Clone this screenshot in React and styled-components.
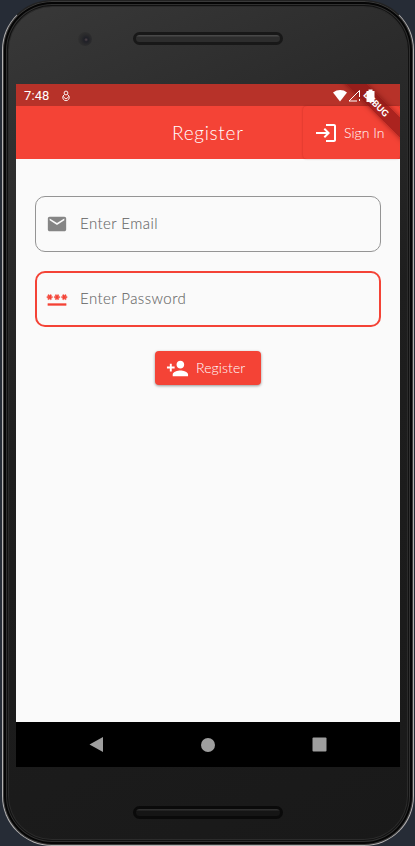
import React from "react";
import styled, { createGlobalStyle } from "styled-components";

const Global = createGlobalStyle`
  * { box-sizing: border-box; }
  body { margin: 0; background: #262c36; overflow: hidden; }
`;
const Stage = styled.div`
  width: 415px; height: 846px; padding: 0 1px 0 2px; overflow: hidden;
  background: #262c36;
  font-family: Lato, "Open Sans", sans-serif; font-weight: 300;
`;
const Phone = styled.div`
  width: 412px; height: 846px; padding: 1px 13px 0;
  display: flex; flex-direction: column;
  border-radius: 50px;
  border: 1px solid #b4b2b2;
  border-top-color: #222;
  background: linear-gradient(155deg, #393939 0%, #2b2b2b 22%, #1e1e1e 45%, #191919 100%);
  box-shadow: inset 0 0 0 1px #3a3a3a, inset 0 0 0 3px #050505, inset 0 0 0 4px #303030, inset 0 0 0 5px #111, inset 0 0 0 6px #2b2b2b;
`;
const Bezel = styled.div`
  height: ${(p) => p.$height}px; flex: none;
  display: flex; align-items: flex-start;
  padding: ${(p) => p.$top}px 0 0 ${(p) => p.$left}px;
`;
const Camera = styled.div`
  width: 14px; height: 14px; margin-right: 41px; border-radius: 50%;
  background: radial-gradient(circle at 58% 55%, #51454b 0, #1f2027 18%, #29292b 42%, #303030 70%);
`;
const Speaker = styled.div`
  width: 150px; height: 13px; border-radius: 7px;
  border: 3px solid ${(p) => p.$rim};
  background: linear-gradient(${(p) => p.$light} 0 1px, ${(p) => p.$fill} 2px);
`;
const Screen = styled.div`
  width: 384px; height: 683px; flex: none; display: flex; flex-direction: column;
  background: #fafafa; overflow: hidden; position: relative;
`;
const StatusBar = styled.div`
  height: 22px; flex: none; background: #b73229; color: #fff;
  display: flex; align-items: center; padding: 1px 23px 0 8px;
  font: 400 13px Roboto, sans-serif;
`;
const Clock = styled.span`width: 37px; letter-spacing: 0.1px;`;
const Signals = styled.div`
  margin-left: auto; display: flex; align-items: center; position: relative; z-index: 2;
`;
const AppBar = styled.header`
  height: 53px; flex: none; background: #f44336; color: #fff;
  display: flex; align-items: stretch;
`;
const Title = styled.h1`
  margin: 0; padding-left: 156px; width: 287px; line-height: 53px;
  font-size: 19px; font-weight: 300; letter-spacing: 0.7px; white-space: nowrap;
`;
const SignIn = styled.button`
  width: 97px; border: 0; border-radius: 4px; padding: 0 0 0 11px;
  display: flex; align-items: center; gap: 6px;
  background: #f44336; color: #fff; font: inherit; font-size: 14px;
  letter-spacing: 0; white-space: nowrap;
  box-shadow: 0 0 2px rgba(100, 0, 0, 0.3);
`;
const Form = styled.main`
  flex: 1; padding: 37px 19px 0; display: flex; flex-direction: column; align-items: center;
`;
const Field = styled.div`
  width: 346px; height: 56px; flex: none; margin-bottom: 19px;
  border: ${(p) => (p.$active ? "2px solid #f44336" : "1px solid #949494")};
  border-radius: 10px; padding-left: ${(p) => (p.$active ? 9 : 10)}px;
  display: flex; align-items: center; gap: 12px;
  color: #666; font-size: 15px; letter-spacing: 0.45px;
`;
const Label = styled.span`padding-bottom: 2px; -webkit-text-stroke: 0.1px currentColor;`;
const Submit = styled.button`
  width: 106px; height: 34px; margin-top: 5px; padding: 0 0 0 11px; border: 0; border-radius: 4px;
  display: flex; align-items: center; gap: 7px;
  background: #f44336; color: #fff; font: inherit; font-size: 14px; letter-spacing: 0.1px;
  box-shadow: 0 1px 3px rgba(0, 0, 0, 0.4);
  span { padding-bottom: 2px; }
`;
const NavBar = styled.nav`
  height: 45px; flex: none; background: #000;
  display: flex; align-items: center; justify-content: space-between; padding: 0 73px;
`;
const Banner = styled.div`
  position: absolute; z-index: 1; top: 14px; right: -38px; width: 120px; height: 15px;
  transform: rotate(45deg); background: rgba(136, 20, 20, 0.68);
  box-shadow: 0 0 5px rgba(70, 0, 0, 0.5);
  color: #fff; font: 900 9px/15px Lato, sans-serif; text-align: center; padding-right: 5px;
`;

const Icon = ({ size = 24, color = "#fff", view = "0 0 24 24", children }) => (
  <svg width={size} height={size} viewBox={view} fill={color}>{children}</svg>
);

export default function App() {
  return (
    <Stage>
      <Global />
      <Phone>
        <Bezel $height={82} $top={30} $left={62}>
          <Camera />
          <Speaker $rim="#181818" $fill="#2d2d2d" $light="#484848" />
        </Bezel>
        <Screen>
          <StatusBar>
            <Clock>7:48</Clock>
            <svg width="10" height="12" viewBox="0 0 10 12" fill="none" stroke="#fff" strokeOpacity=".9">
              <circle cx="5" cy="3" r="1.9" />
              <path d="M3.400 4.600 2 6a3.300 3.300 0 1 0 6 0L6.600 4.600M2 6.500l3 2.500 3-2.500" />
            </svg>
            <Signals>
              <svg width="44" height="14" viewBox="0 0 44 14">
                <path fill="#fff" d="M0 3.500C4.500.2 10 .2 14 3.500L7 12.500z" />
                <path fill="none" stroke="#fff" d="M16 12h8M16 12 26.500 1.500V8M26.500 10v2" />
                <path fill="#fff" d="M35.500 .5h4V2h2v11h-8V2h2z" />
              </svg>
            </Signals>
          </StatusBar>
          <AppBar>
            <Title>Register</Title>
            <SignIn>
              <Icon>
                <path d="M11 7 9.600 8.400l2.600 2.600H2v2h10.200l-2.600 2.600L11 17l5-5zM20 19h-8v2h8c1.100 0 2-.9 2-2V5c0-1.100-.9-2-2-2h-8v2h8z" />
              </Icon>
              <span>Sign In</span>
            </SignIn>
          </AppBar>
          <Form>
            <Field>
              <Icon size={22} color="#858585"><path d="M20 4H4c-1.100 0-1.990.9-1.990 2L2 18c0 1.100.9 2 2 2h16c1.100 0 2-.9 2-2V6c0-1.100-.9-2-2-2zm0 4-8 5-8-5V6l8 5 8-5z" /></Icon>
              <Label>Enter Email</Label>
            </Field>
            <Field $active>
              <Icon size={22} color="#f44336"><path stroke="#f44336" strokeWidth=".4" d="M2 17h20v2H2zm1.150-4.050L4 11.470l.85 1.480 1.300-.75-.85-1.480H7v-1.500H5.300l.85-1.470L4.850 7 4 8.470 3.150 7l-1.300.75.85 1.470H1v1.500h1.700l-.85 1.480zm6.700-.75 1.300.75.85-1.480.85 1.480 1.300-.75-.85-1.480H15v-1.500h-1.700l.85-1.470-1.300-.75L12 8.470 11.150 7l-1.300.75.85 1.470H9v1.500h1.700zM23 9.220h-1.700l.85-1.470-1.300-.75L20 8.470 19.150 7l-1.300.75.85 1.470H17v1.500h1.700l-.85 1.480 1.300.75.85-1.480.85 1.480 1.300-.75-.85-1.480H23z" /></Icon>
              <Label>Enter Password</Label>
            </Field>
            <Submit>
              <Icon size={23}><path d="M15 12c2.210 0 4-1.790 4-4s-1.790-4-4-4-4 1.790-4 4 1.790 4 4 4zm-9-2V7H4v3H1v2h3v3h2v-3h3v-2zm9 4c-2.670 0-8 1.340-8 4v2h16v-2c0-2.660-5.330-4-8-4z" /></Icon>
              <span>Register</span>
            </Submit>
          </Form>
          <NavBar>
            <Icon size={15} color="#9e9e9e" view="0 0 15 15"><path d="M0.500 7.500 14 0v15z" /></Icon>
            <Icon size={14} color="#9e9e9e" view="0 0 14 14"><circle cx="7" cy="7" r="7" /></Icon>
            <Icon size={15} color="#9e9e9e" view="0 0 15 15"><rect x=".5" y=".5" width="14" height="14" rx="1" /></Icon>
          </NavBar>
          <Banner>DEBUG</Banner>
        </Screen>
        <Bezel $height={77} $top={39} $left={117}>
          <Speaker $rim="#0a0a0a" $fill="#151515" $light="#303030" />
        </Bezel>
      </Phone>
    </Stage>
  );
}
